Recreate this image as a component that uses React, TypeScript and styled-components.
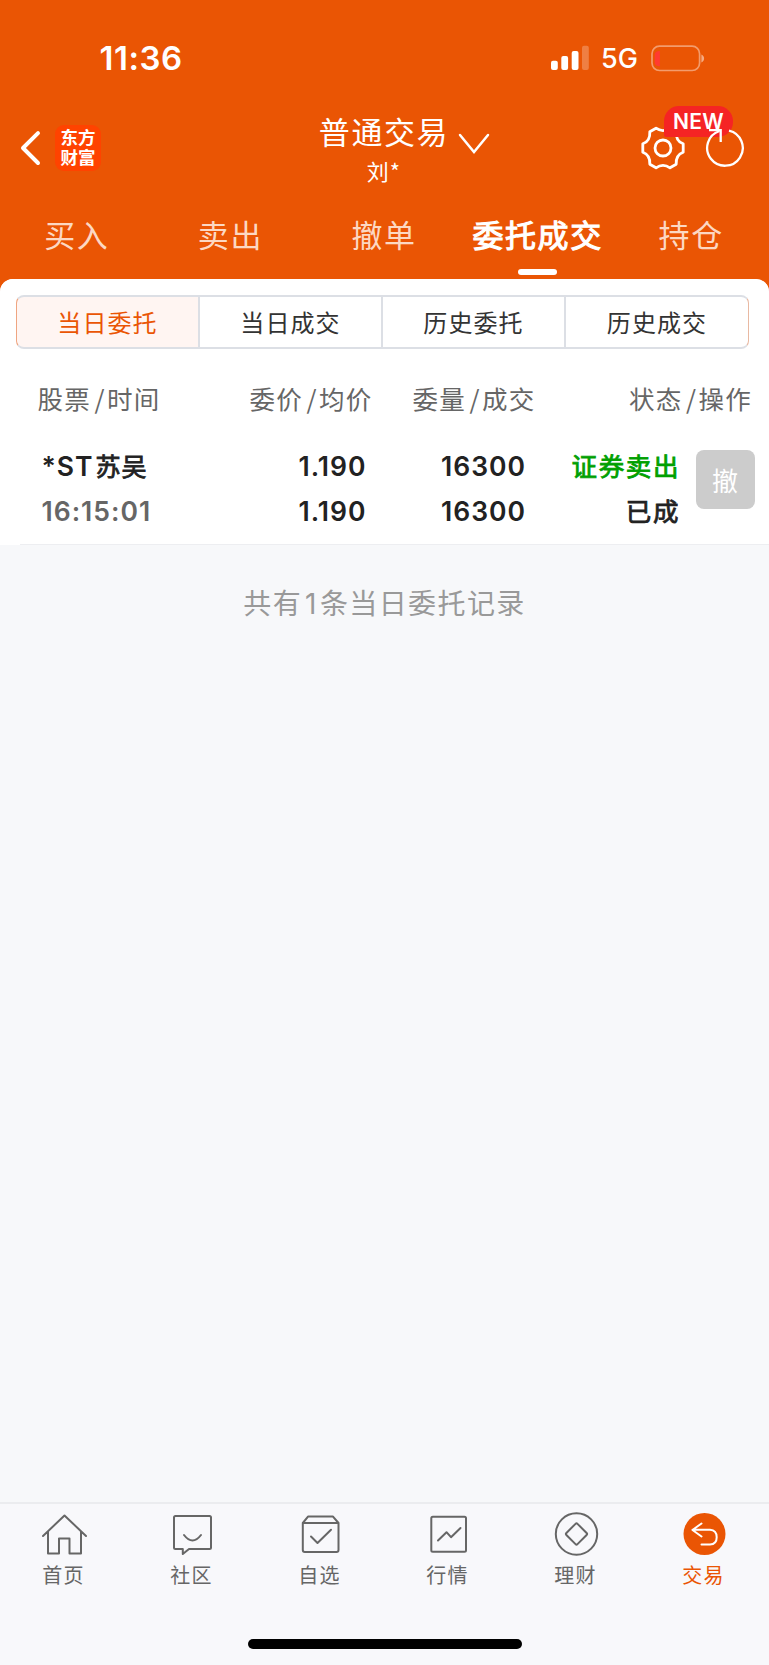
import React from 'react';
import styled, { createGlobalStyle } from 'styled-components';

const ORANGE = '#ea5504';
const SANS = `Inter, "Noto Sans CJK SC", sans-serif`;
const CJK = `"Noto Sans CJK SC", sans-serif`;

const GlobalStyle = createGlobalStyle`
  * { box-sizing: border-box; }
  body { margin: 0; background: ${ORANGE}; }
`;

const Screen = styled.div`
  width: 769px;
  height: 1665px;
  display: flex;
  flex-direction: column;
  background: ${ORANGE};
  font-family: ${SANS};
  color: #222;
  white-space: nowrap;
  overflow: hidden;
`;

const StatusBar = styled.div`
  height: 100px;
  flex: none;
  display: flex;
  align-items: flex-start;
  padding: 38px 64px 0 99.5px;
  color: #fff;
`;

const Clock = styled.div`
  flex: 1;
  font-size: 33px;
  line-height: 40px;
  letter-spacing: 0.5px;
  font-weight: 600;
`;

const StatusIcons = styled.div`
  display: flex;
  align-items: center;
  height: 40px;
`;

const Network = styled.span`
  width: 36px;
  margin: 1px 14px 0 11px;
  font-size: 27px;
  line-height: 38px;
  font-weight: 500;
`;

const NavBar = styled.div`
  height: 100px;
  flex: none;
  display: grid;
  grid-template-columns: 300px 1fr 152px;
  color: #fff;
`;

const NavLeft = styled.div`
  display: flex;
  align-items: center;
  height: 96px;
  padding-left: 20px;
  gap: 13px;
`;

const Logo = styled.div`
  width: 46px;
  height: 46px;
  border-radius: 9px;
  background: #ff4300;
  color: #fff;
  font-family: "Noto Sans CJK SC", serif;
  font-weight: 700;
  font-size: 17.5px;
  line-height: 19.5px;
  text-align: center;
  padding-top: 2px;
`;

const NavTitle = styled.div`
  display: flex;
  padding-left: 19px;
  gap: 9px;
`;

const TitleBlock = styled.div`
  display: flex;
  flex-direction: column;
  align-items: center;
  width: 130px;
  font-family: ${CJK};
`;

const Title = styled.div`
  margin-top: 8px;
  font-size: 31px;
  line-height: 46px;
  letter-spacing: 1.6px;
  font-weight: 400;
`;

const Account = styled.div`
  font-size: 22px;
  line-height: 32px;
  letter-spacing: 1px;
`;

const ChevronWrap = styled.div`
  padding-top: 33px;
`;

const NavActions = styled.div`
  position: relative;
  display: flex;
  align-items: flex-start;
  padding-top: 26px;
  padding-left: 24px;
  gap: 20px;
`;

const NewBadge = styled.div`
  position: absolute;
  left: 47px;
  top: 6px;
  width: 69px;
  height: 31px;
  border-radius: 15px 15px 15px 2px;
  background: #f52424;
  font-size: 21px;
  line-height: 31px;
  letter-spacing: 0.3px;
  font-weight: 600;
  text-align: center;
`;

const ActionIcon = styled.span`
  position: relative;
  display: flex;
`;

const Tabs = styled.div`
  height: 79px;
  flex: none;
  display: grid;
  grid-template-columns: repeat(5, 153.6px);
`;

const Tab = styled.div<{ $active?: boolean }>`
  display: flex;
  flex-direction: column;
  align-items: center;
  justify-content: space-between;
  padding: 11px 0 4px;
  font-family: ${CJK};
  font-size: 31px;
  line-height: 46px;
  letter-spacing: 1.6px;
  -webkit-text-stroke: ${(p) => (p.$active ? '1.1px #fff' : '0')};
  color: ${(p) => (p.$active ? '#fff' : '#fcd8c3')};
`;

const TabMark = styled.i`
  width: 39px;
  height: 6px;
  border-radius: 3px;
  background: #fff;
`;

const Sheet = styled.div`
  flex: 1;
  display: flex;
  flex-direction: column;
  border-radius: 13px 13px 0 0;
  background: #f7f8fa;
  overflow: hidden;
`;

const Card = styled.div`
  height: 266px;
  flex: none;
  background: #fff;
  padding-top: 16px;
`;

const Segments = styled.div`
  display: grid;
  grid-template-columns: 184px 183px 183px 183px;
  width: 733px;
  height: 54px;
  margin-left: 16px;
`;

const Segment = styled.div<{ $active?: boolean; $edge?: 'start' | 'end' }>`
  border: solid #dcdfe5;
  border-width: 2px ${(p) => (p.$edge === 'end' ? '1px' : '2px')} 2px
    ${(p) => (p.$edge === 'start' ? '1px' : '0')};
  ${(p) => p.$edge === 'start' && 'border-left-color: #efa581; border-radius: 8px 0 0 8px;'}
  ${(p) => p.$edge === 'end' && 'border-right-color: #e9b9a2; border-radius: 0 8px 8px 0;'}
  background: ${(p) => (p.$active ? '#fff5f2' : '#fff')};
  color: ${(p) => (p.$active ? ORANGE : '#333')};
  font-family: ${CJK};
  font-size: 24px;
  line-height: 49px;
  letter-spacing: 1.1px;
  text-align: center;
`;

const HeadRow = styled.div`
  display: grid;
  grid-template-columns: 200px 172.5px 163px 216.5px;
  margin-top: 30px;
  height: 38px;
  font-family: ${CJK};
  font-size: 25.5px;
  line-height: 38px;
  letter-spacing: 1.3px;
  color: #666;
`;

const HeadCell = styled.div<{ $first?: boolean }>`
  text-align: ${(p) => (p.$first ? 'left' : 'right')};
  padding-left: ${(p) => (p.$first ? '37.5px' : '0')};
`;

const Slash = styled.span`
  margin: 0 1px 0 3.5px;
`;

const OrderRow = styled.div`
  display: grid;
  grid-template-columns: 180px 166.5px 159.5px 154px 59px;
  margin-left: 20px;
  margin-top: 27px;
  height: 101px;
  border-bottom: 1px solid #edeef1;
`;

const Cell = styled.div<{ $align?: 'left' }>`
  display: flex;
  flex-direction: column;
  align-items: ${(p) => (p.$align === 'left' ? 'flex-start' : 'flex-end')};
  padding-left: ${(p) => (p.$align === 'left' ? '21.5px' : '0')};
`;

const Value = styled.div<{ $tone?: string; $cjk?: boolean }>`
  height: 45px;
  line-height: ${(p) => (p.$cjk ? '41px' : '45px')};
  font-size: ${(p) => (p.$cjk ? '25.5px' : '26.5px')};
  letter-spacing: ${(p) => (p.$cjk ? '1.6px' : '1px')};
  font-weight: ${(p) => (p.$cjk ? 400 : 600)};
  -webkit-text-stroke: ${(p) => (p.$cjk ? '0.8px' : '0')};
  color: ${(p) => p.$tone ?? '#222'};
  font-family: ${(p) => (p.$cjk ? CJK : SANS)};
`;

const StockName = styled.span`
  margin-left: 2px;
  font-family: ${CJK};
  font-size: 25px;
  font-weight: 400;
  line-height: 20px;
  -webkit-text-stroke: 0.8px;
`;

const CancelButton = styled.button`
  width: 59px;
  height: 59px;
  margin: 6px 0 0 15.5px;
  padding: 0;
  border: 0;
  border-radius: 8px;
  background: #ccc;
  color: #fff;
  font-family: ${CJK};
  font-size: 26px;
  line-height: 57px;
`;

const Summary = styled.div`
  flex: 1;
  padding-top: 36px;
  text-align: center;
  font-family: ${CJK};
  font-size: 28px;
  line-height: 42px;
  letter-spacing: 1.4px;
  color: #999;
`;

const Count = styled.span`
  margin: 0 2px 0 3px;
  font-family: ${SANS};
  font-weight: 400;
`;

const BottomBar = styled.nav`
  height: 163px;
  flex: none;
  display: flex;
  flex-direction: column;
  align-items: center;
  justify-content: space-between;
  border-top: 2px solid #ebecef;
  background: #f8f8fb;
  padding-bottom: 16px;
`;

const BottomItems = styled.div`
  display: grid;
  grid-template-columns: repeat(6, 128px);
  width: 769px;
`;

const BottomItem = styled.div<{ $active?: boolean }>`
  display: flex;
  flex-direction: column;
  align-items: center;
  padding-top: 8px;
  font-family: ${CJK};
  font-size: 20px;
  line-height: 30px;
  letter-spacing: 1.3px;
  color: ${(p) => (p.$active ? ORANGE : '#666')};
`;

const BottomLabel = styled.span`
  margin: 4px 1px 0 0;
`;

const HomeIndicator = styled.div`
  width: 274px;
  height: 10px;
  border-radius: 5px;
  background: #000;
`;

const Signal = () => (
  <svg width="39" height="26" viewBox="0 0 39 26" fill="#fff">
    <rect x="0" y="15.7" width="6.8" height="9.3" rx="2" />
    <rect x="10.3" y="11" width="6.8" height="14" rx="2" />
    <rect x="20.7" y="6" width="6.8" height="19" rx="2" />
    <rect x="31" y="0.7" width="6.8" height="24.3" rx="2" opacity="0.25" />
  </svg>
);

const Battery = () => (
  <svg width="54" height="27" viewBox="0 0 54 27">
    <rect x="1" y="1.2" width="47.6" height="24.3" rx="7.5" fill="none" stroke="#fff" strokeOpacity="0.42" strokeWidth="1.7" />
    <path d="M50.4 9.5c3.6 1.4 3.6 6.6 0 8z" fill="#fff" fillOpacity="0.5" />
    <path d="M8.9 6v15.2c-3 0-5.2-1-5.2-4V10c0-3 2.2-4 5.2-4z" fill="#ff3b30" />
  </svg>
);

const Back = () => (
  <svg width="22" height="36" viewBox="0 0 22 36" fill="none" stroke="#fff" strokeWidth="4" strokeLinecap="round" strokeLinejoin="round">
    <path d="M18 3.2 3 18l15 15" />
  </svg>
);

const Chevron = () => (
  <svg width="32" height="22" viewBox="0 0 32 22" fill="none" stroke="#fff" strokeWidth="2.5" strokeLinecap="round">
    <path d="m2 2 14 17L30 2" />
  </svg>
);

const Gear = () => (
  <svg width="44" height="44" viewBox="-22 -22 44 44" fill="none" stroke="#fff" strokeWidth="2.8" strokeLinejoin="round">
    <path d="M-7-19.8Q0-15 7-19.8L13.2-16.2Q12.6-7 20.2-4.2V4.2Q12.6 7 13.2 16.2L7 19.8Q0 15-7 19.8L-13.2 16.2Q-12.6 7-20.2 4.2V-4.2Q-12.6-7-13.2-16.2Z" />
    <circle r="8" />
  </svg>
);

const Refresh = () => (
  <svg width="42" height="44" viewBox="0 0 42 44" fill="none" stroke="#fff" strokeWidth="2.3">
    <path d="M24 4.6A17.8 17.8 0 1 1 14.5 5" />
    <path d="M4 4.2h11.7v11.7" />
  </svg>
);

const icons = {
  home: (
    <path d="M1 24 22.5 3.5 44 24M6 19.5V41.5H17V26.5H27.5V41.5H39V19.5" />
  ),
  community: (
    <>
      <path d="M5.5 4h34q1.5 0 1.5 1.5v30q0 1.5-1.5 1.5H19l-6.2 5v-5h-7.3q-1.5 0-1.5-1.5v-30q0-1.5 1.5-1.5" />
      <path d="M14 23q8.500 11 17 0" />
    </>
  ),
  picks: (
    <>
      <path d="M4.8 11 10 4.6h25L40.5 11v27q0 2-2 2H6.8q-2 0-2-2zM4.8 11h35.7" />
      <path d="m13 24.5 6.5 6.5L33 17.8" />
    </>
  ),
  market: (
    <>
      <rect x="5.3" y="4.7" width="34.7" height="35" rx="1.5" />
      <path d="m12 28.5 8.500-8.300 4.500 5 9.500-9.200" />
    </>
  ),
  wealth: (
    <>
      <circle cx="22.5" cy="22" r="20.7" />
      <path d="M21.5 11.9q1-1 2 0l9.1 9.1q1 1 0 2l-9.1 9.1q-1 1-2 0L12.4 23q-1-1 0-2z" />
    </>
  ),
  trade: (
    <>
      <circle cx="22.5" cy="22" r="21" fill={ORANGE} stroke="none" />
      <path stroke="#fff" d="M19.500 11.500 10.500 18l9 6.500M10.500 17.700H28q6.700.5 6.700 7.500T28 32.500h-8.500" />
    </>
  ),
};

const bottomItems: { key: keyof typeof icons; label: string }[] = [
  { key: 'home', label: '首页' },
  { key: 'community', label: '社区' },
  { key: 'picks', label: '自选' },
  { key: 'market', label: '行情' },
  { key: 'wealth', label: '理财' },
  { key: 'trade', label: '交易' },
];

const tabs = ['买入', '卖出', '撤单', '委托成交', '持仓'];
const segments = ['当日委托', '当日成交', '历史委托', '历史成交'];
const heads = [['股票', '时间'], ['委价', '均价'], ['委量', '成交'], ['状态', '操作']];

export default function App() {
  return (
    <Screen>
      <GlobalStyle />
      <StatusBar>
        <Clock>11:36</Clock>
        <StatusIcons>
          <Signal />
          <Network>5G</Network>
          <Battery />
        </StatusIcons>
      </StatusBar>
      <NavBar>
        <NavLeft>
          <Back />
          <Logo>东方<br />财富</Logo>
        </NavLeft>
        <NavTitle>
          <TitleBlock>
            <Title>普通交易</Title>
            <Account>刘*</Account>
          </TitleBlock>
          <ChevronWrap>
            <Chevron />
          </ChevronWrap>
        </NavTitle>
        <NavActions>
          <ActionIcon><Gear /></ActionIcon>
          <NewBadge>NEW</NewBadge>
          <ActionIcon><Refresh /></ActionIcon>
        </NavActions>
      </NavBar>
      <Tabs>
        {tabs.map((t, i) => (
          <Tab key={t} $active={i === 3}>
            {t}
            {i === 3 && <TabMark />}
          </Tab>
        ))}
      </Tabs>
      <Sheet>
        <Card>
          <Segments>
            {segments.map((s, i) => (
              <Segment key={s} $active={i === 0} $edge={i === 0 ? 'start' : i === 3 ? 'end' : undefined}>
                {s}
              </Segment>
            ))}
          </Segments>
          <HeadRow>
            {heads.map(([a, b], i) => (
              <HeadCell key={a} $first={i === 0}>
                {a}<Slash>/</Slash>{b}
              </HeadCell>
            ))}
          </HeadRow>
          <OrderRow>
            <Cell $align="left">
              <Value>*ST<StockName>苏吴</StockName></Value>
              <Value $tone="#666">16:15:01</Value>
            </Cell>
            <Cell>
              <Value>1.190</Value>
              <Value>1.190</Value>
            </Cell>
            <Cell>
              <Value>16300</Value>
              <Value>16300</Value>
            </Cell>
            <Cell>
              <Value $cjk $tone="#00a000">证券卖出</Value>
              <Value $cjk>已成</Value>
            </Cell>
            <CancelButton>撤</CancelButton>
          </OrderRow>
        </Card>
        <Summary>共有<Count>1</Count>条当日委托记录</Summary>
        <BottomBar>
          <BottomItems>
            {bottomItems.map(({ key, label }) => (
              <BottomItem key={key} $active={key === 'trade'}>
                <svg width="45" height="44" viewBox="0 0 45 44" fill="none" stroke="#666" strokeWidth="2" strokeLinejoin="round" strokeLinecap="round">
                  {icons[key]}
                </svg>
                <BottomLabel>{label}</BottomLabel>
              </BottomItem>
            ))}
          </BottomItems>
          <HomeIndicator />
        </BottomBar>
      </Sheet>
    </Screen>
  );
}
